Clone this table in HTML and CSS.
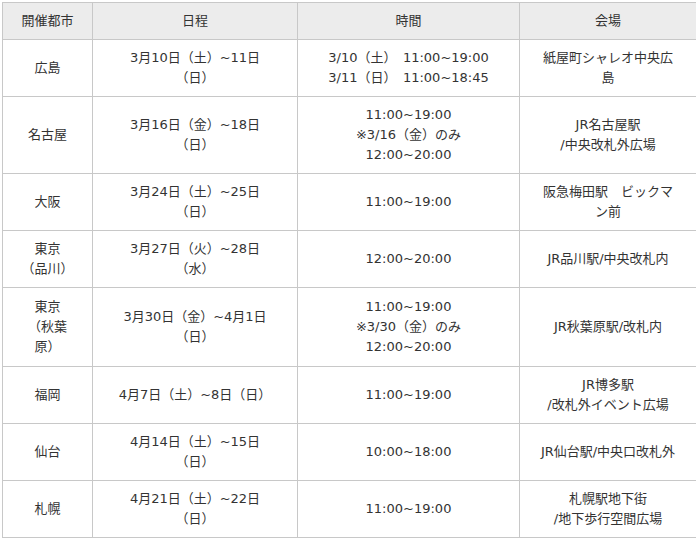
FILE: index.html
```html
<!DOCTYPE html>
<html lang="ja">
<head>
<meta charset="utf-8">
<title>開催スケジュール</title>
<link rel="stylesheet" href="styles.css">
</head>
<body>
<table class="schedule">
  <colgroup>
    <col class="c-city">
    <col class="c-date">
    <col class="c-time">
    <col class="c-venue">
  </colgroup>
  <thead>
    <tr class="head">
      <th>開催都市</th>
      <th>日程</th>
      <th>時間</th>
      <th>会場</th>
    </tr>
  </thead>
  <tbody>
    <tr class="r1">
      <td>広島</td>
      <td>3月10日（土）~11日<br>（日）</td>
      <td>3/10（土）　11:00~19:00<br>3/11（日）　11:00~18:45</td>
      <td>紙屋町シャレオ中央広<br>島</td>
    </tr>
    <tr class="r2">
      <td>名古屋</td>
      <td>3月16日（金）~18日<br>（日）</td>
      <td>11:00~19:00<br>※3/16（金）のみ<br>12:00~20:00</td>
      <td>JR名古屋駅<br>/中央改札外広場</td>
    </tr>
    <tr class="r3">
      <td>大阪</td>
      <td>3月24日（土）~25日<br>（日）</td>
      <td>11:00~19:00</td>
      <td>阪急梅田駅　ビックマ<br>ン前</td>
    </tr>
    <tr class="r4">
      <td>東京<br>（品川）</td>
      <td>3月27日（火）~28日<br>（水）</td>
      <td>12:00~20:00</td>
      <td>JR品川駅/中央改札内</td>
    </tr>
    <tr class="r5 tall">
      <td>東京<br>（秋葉<br>原）</td>
      <td>3月30日（金）~4月1日<br>（日）</td>
      <td>11:00~19:00<br>※3/30（金）のみ<br>12:00~20:00</td>
      <td>JR秋葉原駅/改札内</td>
    </tr>
    <tr class="r6">
      <td>福岡</td>
      <td>4月7日（土）~8日（日）</td>
      <td>11:00~19:00</td>
      <td>JR博多駅<br>/改札外イベント広場</td>
    </tr>
    <tr class="r7">
      <td>仙台</td>
      <td>4月14日（土）~15日<br>（日）</td>
      <td>10:00~18:00</td>
      <td>JR仙台駅/中央口改札外</td>
    </tr>
    <tr class="r8">
      <td>札幌</td>
      <td>4月21日（土）~22日<br>（日）</td>
      <td>11:00~19:00</td>
      <td>札幌駅地下街<br>/地下歩行空間広場</td>
    </tr>
  </tbody>
</table>
</body>
</html>
```
FILE: styles.css
```css
html, body {
  background: #ffffff;
}
body {
  margin: 2px;
  font-family: "DejaVu Sans", "Noto Sans CJK JP", sans-serif;
  font-size: 13px;
  color: #333333;
}
.schedule {
  border-collapse: collapse;
  table-layout: fixed;
  width: 694px;
}
.c-city { width: 90px; }
.c-date { width: 205px; }
.c-time { width: 222px; }
.c-venue { width: 177px; }
.schedule th,
.schedule td {
  border: 1px solid #c8c8c8;
  padding: 8px 4px;
  line-height: 20px;
  text-align: center;
  vertical-align: middle;
  white-space: nowrap;
}
.schedule .tall td {
  padding-top: 9px;
  padding-bottom: 9px;
}
.schedule th {
  background: #ececec;
  font-weight: normal;
}
```
